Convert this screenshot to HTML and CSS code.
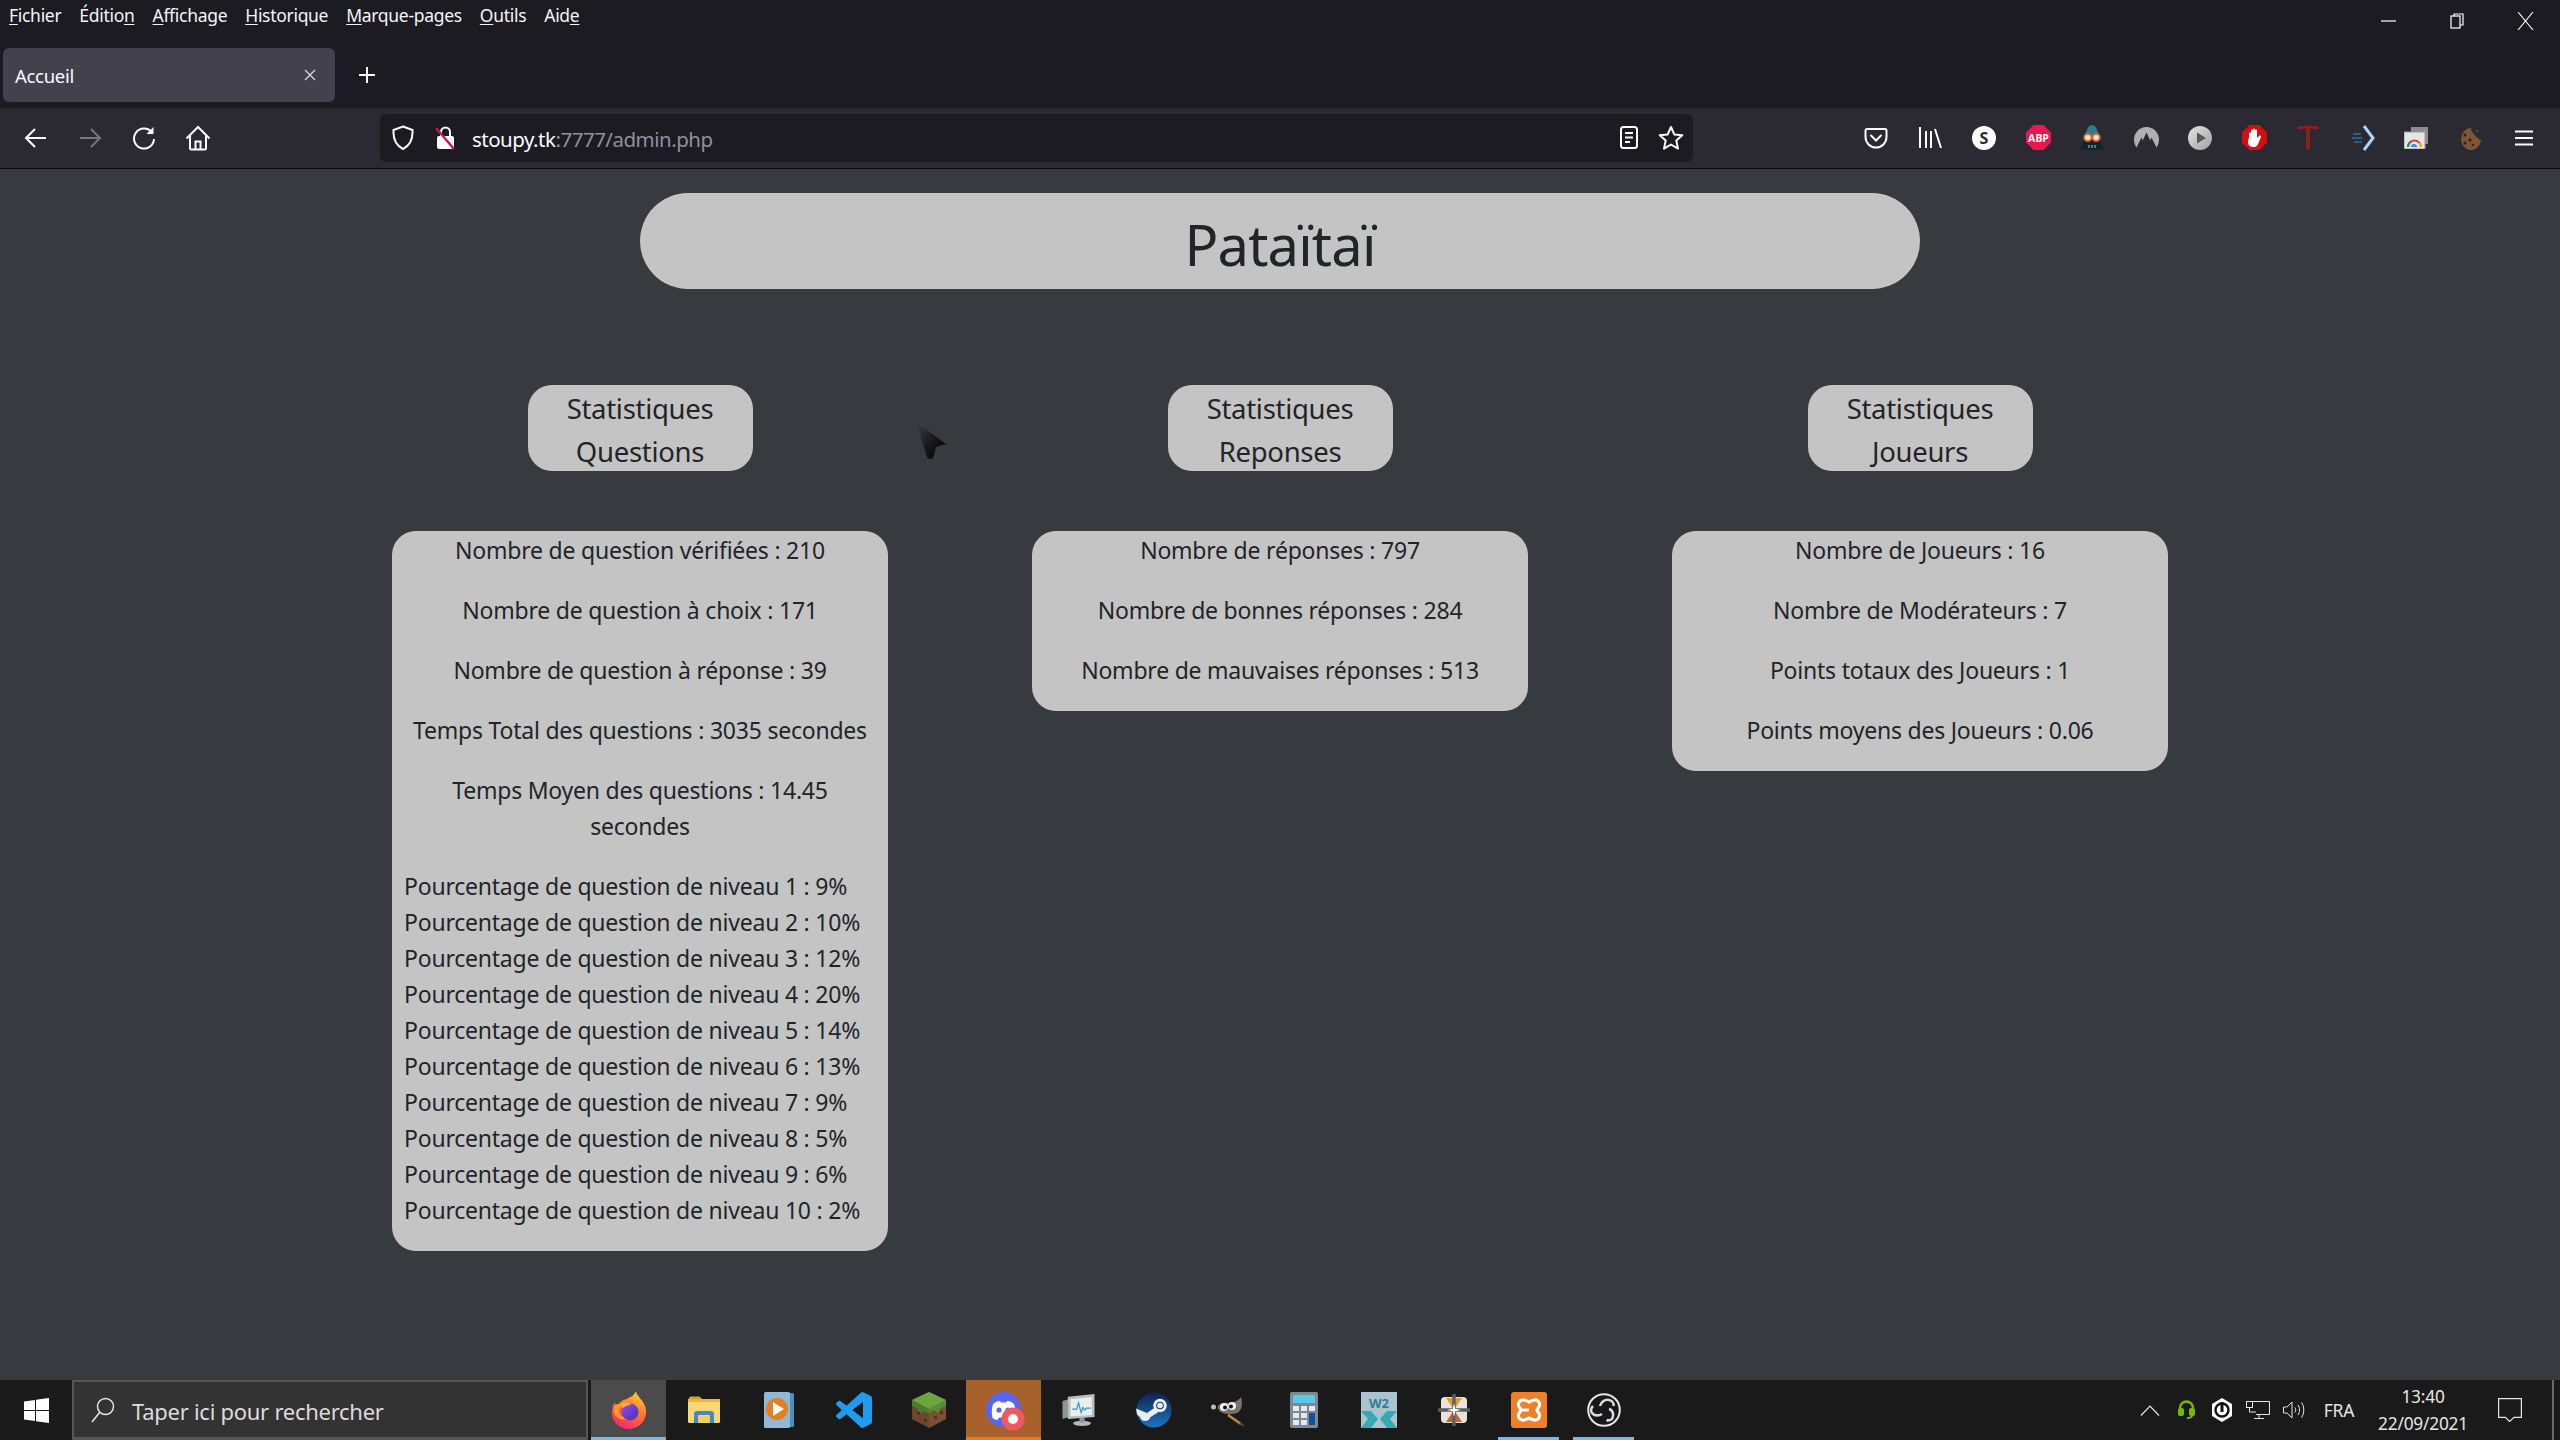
FILE: index.html
```html
<!DOCTYPE html>
<html lang="fr">
<head>
<meta charset="utf-8">
<title>Accueil</title>
<link rel="stylesheet" href="styles.css">
</head>
<body>
<header class="browser">
  <div class="titlebar">
    <nav class="menu">
      <span><u>F</u>ichier</span><span>Éditio<u>n</u></span><span><u>A</u>ffichage</span><span><u>H</u>istorique</span><span><u>M</u>arque-pages</span><span><u>O</u>utils</span><span>Aid<u>e</u></span>
    </nav>
    <div class="winctl">
      <svg width="16" height="16" viewBox="0 0 16 16"><path d="M0 8h15" stroke="#fff" stroke-width="1.2"/></svg>
      <svg width="16" height="16" viewBox="0 0 16 16" fill="none" stroke="#fff" stroke-width="1.2"><rect x="2" y="3" width="9" height="12"/><path d="M5 3V1h9v11h-3"/></svg>
      <svg width="18" height="18" viewBox="0 0 18 18"><path d="M1 0l15 18M16 0L1 18" stroke="#fff" stroke-width="1.1"/></svg>
    </div>
  </div>
  <div class="tabbar">
    <div class="tab"><span>Accueil</span>
      <svg width="12" height="12" viewBox="0 0 12 12"><path d="M1 1l10 10M11 1L1 11" stroke="#ddd" stroke-width="1.2"/></svg>
    </div>
    <svg class="newtab" width="18" height="18" viewBox="0 0 18 18"><path d="M9 1v16M1 9h16" stroke="#fff" stroke-width="2"/></svg>
  </div>
  <div class="navbar">
    <div class="navbtns">
      <span class="slot"><svg width="24" height="24" viewBox="0 0 24 24" fill="none" stroke="#fbfbfe" stroke-width="2"><path d="M22 12H2M11 3l-9 9 9 9"/></svg></span>
      <span class="slot"><svg width="24" height="24" viewBox="0 0 24 24" fill="none" stroke="#77767c" stroke-width="2"><path d="M2 12h20M13 3l9 9-9 9"/></svg></span>
      <span class="slot"><svg width="24" height="24" viewBox="0 0 24 24" fill="none" stroke="#fbfbfe" stroke-width="2"><path d="M20 6.5A10 10 0 1 0 22 13"/><path d="M21.5 1v7h-7z" fill="#fbfbfe" stroke="none"/></svg></span>
      <span class="slot"><svg width="26" height="26" viewBox="0 0 26 26" fill="none" stroke="#fbfbfe" stroke-width="2"><path d="M1.5 13.5L13 2l11.500 11.500M5 10.500V23a1.500 1.500 0 0 0 1.500 1.500h13A1.500 1.500 0 0 0 21 23V10.500"/><path d="M10.500 24v-7.500h5V24"/></svg></span>
    </div>
    <div class="urlbar">
      <svg class="shield" width="22" height="25" viewBox="0 0 22 25" fill="none" stroke="#fbfbfe" stroke-width="2"><path d="M11 1.500L20.500 5c.5 8-1.500 15-9.500 19C3 20 1 13 1.500 5z"/></svg>
      <svg class="lock" width="22" height="26" viewBox="0 0 22 26" fill="none"><path d="M7 11V7a4.500 4.500 0 0 1 9 0v4" stroke="#fbfbfe" stroke-width="2"/><rect x="3" y="11" width="17" height="13" rx="2" fill="#fbfbfe"/><path d="M2 3l18 21" stroke="#c5194f" stroke-width="2.400"/></svg>
      <span class="url"><b>stoupy.tk</b>:7777/admin.php</span>
      <span class="urlicons">
        <svg width="18" height="23" viewBox="0 0 18 23" fill="none" stroke="#fbfbfe" stroke-width="2"><rect x="1" y="1" width="16" height="21" rx="2.500"/><path d="M5 7h8M5 11.500h8M5 16h5"/></svg>
        <svg width="26" height="26" viewBox="0 0 26 26" fill="none" stroke="#fbfbfe" stroke-width="2" stroke-linejoin="round"><path d="M13 2l3.300 7.400 8 .8-6 5.400 1.700 8L13 19.500 6 23.600l1.700-8-6-5.400 8-.8z"/></svg>
      </span>
    </div>
    <div class="extensions">
      <span class="slot"><svg width="24" height="24" viewBox="0 0 24 24" fill="none" stroke="#fbfbfe" stroke-width="2"><path d="M3 3h18a1.500 1.500 0 0 1 1.500 1.500V11A10.500 10.500 0 0 1 1.500 11V4.500A1.500 1.500 0 0 1 3 3z"/><path d="M7 9.500l5 5 5-5" stroke-linecap="round"/></svg></span>
      <span class="slot"><svg width="24" height="24" viewBox="0 0 24 24" fill="none" stroke="#fbfbfe" stroke-width="2"><path d="M2 1v21M8 5v17M13 5v17M17 3l6 19"/></svg></span>
      <span class="slot"><svg width="24" height="24" viewBox="0 0 24 24"><circle cx="12" cy="12" r="12" fill="#fff"/><text x="12" y="17.500" text-anchor="middle" class="ext-s">S</text></svg></span>
      <span class="slot"><svg width="25" height="25" viewBox="0 0 25 25"><path d="M7.500 0h10L25 7.500v10L17.500 25h-10L0 17.500v-10z" fill="#e8174f"/><text x="12.500" y="17" text-anchor="middle" class="ext-abp">ABP</text></svg></span>
      <span class="slot"><svg width="26" height="26" viewBox="0 0 26 26"><path d="M13 0c3 0 5 3 6 8H7c1-5 3-8 6-8z" fill="#2c7d8c"/><path d="M7 7h12l2 8 4 10H1l4-10z" fill="#13242c"/><path d="M7 7h12l1 4H6z" fill="#2c7d8c"/><circle cx="8.800" cy="12.500" r="3.700" fill="#f2e2cf" stroke="#d9622c" stroke-width="1.800"/><circle cx="17.200" cy="12.500" r="3.700" fill="#f2e2cf" stroke="#d9622c" stroke-width="1.800"/><path d="M10 20v3M13 20v3M16 20v3" stroke="#a9c9cf"/></svg></span>
      <span class="slot"><svg width="25" height="21" viewBox="0 0 25 21"><path d="M12.500 0A12.500 12.500 0 0 1 25 12.500c0 3-1 6-2.500 8l-5-10-1.200 3-3.800-8-3.800 8-1.200-3-5 10C1 18.500 0 15.500 0 12.500A12.500 12.500 0 0 1 12.500 0z" fill="#b0b0b3"/></svg></span>
      <span class="slot"><svg width="24" height="24" viewBox="0 0 24 24"><defs><linearGradient id="ply" x1="0" y1="0" x2="1" y2="1"><stop offset="0" stop-color="#e4e4e4"/><stop offset="1" stop-color="#a0a0a0"/></linearGradient></defs><circle cx="12" cy="12" r="12" fill="url(#ply)"/><path d="M9 6.500l9 5.500-9 5.500z" fill="#55555a"/></svg></span>
      <span class="slot"><svg width="25" height="25" viewBox="0 0 25 25"><path d="M7.500 0h10L25 7.500v10L17.500 25h-10L0 17.500v-10z" fill="#d50f0f"/><path d="M7 12V8.500a1 1 0 0 1 2 0V12V5.500a1 1 0 0 1 2 0V12V4.500a1 1 0 0 1 2 0V12V5.500a1 1 0 0 1 2 0V13l2-2c1-1 2.500 0 2 1l-3 7c-1 2-2 3-4 3-3 0-6-1-6-5z" fill="#fff"/></svg></span>
      <span class="slot"><svg width="22" height="25" viewBox="0 0 22 25"><path d="M1 1h20v3.500L13 3.500V23l-2 2H9V3.500l-8 1z" fill="#8c1f18"/></svg></span>
      <span class="slot"><svg class="ext-arrow" width="24" height="26" viewBox="0 0 24 26" fill="none"><path d="M12 1l9 12-9 12" stroke="#a9d4f5" stroke-width="3"/><path d="M1 9h8M0 13h10M2 17h8" stroke="#2d6da8" stroke-width="1.600"/></svg></span>
      <span class="slot"><svg width="24" height="22" viewBox="0 0 24 22"><rect x="7" y="0" width="17" height="17" fill="#8d8d90"/><rect x="0" y="5" width="21" height="17" fill="#e6e6e6" stroke="#999"/><path d="M4 20a6.500 6.500 0 0 1 13 0" fill="none" stroke="#db4437" stroke-width="2"/><path d="M4 20a6.500 6.500 0 0 1 3-5.500" fill="none" stroke="#0f9d58" stroke-width="2"/><path d="M13 20a3 3 0 0 0-6 0z" fill="#4285f4"/><path d="M17 20a6.500 6.500 0 0 0-1.500-4" fill="none" stroke="#f4b400" stroke-width="2"/></svg></span>
      <span class="slot"><svg width="22" height="24" viewBox="0 0 22 24"><path d="M12 2a10 11 0 1 0 10 12c-2 0-3-1-3-2.500-2 0-4-1.500-3.500-4C13.500 7.500 12 5 12 2z" fill="#7d5635"/><circle cx="6" cy="9" r="1.500" fill="#33200f"/><circle cx="11" cy="14" r="1.500" fill="#33200f"/><circle cx="6" cy="17" r="1.500" fill="#33200f"/><circle cx="14" cy="19" r="1.200" fill="#33200f"/><circle cx="18" cy="5" r="1" fill="#7d5635"/></svg></span>
      <span class="slot"><svg width="18" height="16" viewBox="0 0 18 16"><path d="M0 1.500h18M0 8h18M0 14.500h18" stroke="#fbfbfe" stroke-width="2"/></svg></span>
    </div>
  </div>
</header>

<main class="page">
  <h1 class="title">Pataïtaï</h1>
  <div class="columns">
    <section class="col">
      <h2 class="col-head">Statistiques<br>Questions</h2>
      <div class="card">
        <p>Nombre de question vérifiées : 210</p>
        <p>Nombre de question à choix : 171</p>
        <p>Nombre de question à réponse : 39</p>
        <p>Temps Total des questions : 3035 secondes</p>
        <p>Temps Moyen des questions : 14.45 secondes</p>
        <ul class="levels">
          <li>Pourcentage de question de niveau 1 : 9%</li>
          <li>Pourcentage de question de niveau 2 : 10%</li>
          <li>Pourcentage de question de niveau 3 : 12%</li>
          <li>Pourcentage de question de niveau 4 : 20%</li>
          <li>Pourcentage de question de niveau 5 : 14%</li>
          <li>Pourcentage de question de niveau 6 : 13%</li>
          <li>Pourcentage de question de niveau 7 : 9%</li>
          <li>Pourcentage de question de niveau 8 : 5%</li>
          <li>Pourcentage de question de niveau 9 : 6%</li>
          <li>Pourcentage de question de niveau 10 : 2%</li>
        </ul>
      </div>
    </section>
    <section class="col">
      <h2 class="col-head">Statistiques<br>Reponses</h2>
      <div class="card">
        <p>Nombre de réponses : 797</p>
        <p>Nombre de bonnes réponses : 284</p>
        <p>Nombre de mauvaises réponses : 513</p>
      </div>
    </section>
    <section class="col">
      <h2 class="col-head">Statistiques<br>Joueurs</h2>
      <div class="card">
        <p>Nombre de Joueurs : 16</p>
        <p>Nombre de Modérateurs : 7</p>
        <p>Points totaux des Joueurs : 1</p>
        <p>Points moyens des Joueurs : 0.06</p>
      </div>
    </section>
  </div>
  <svg class="cursor" width="30" height="37" viewBox="0 0 30 37">
    <defs><linearGradient id="cur" x1="0" y1="0" x2="1" y2="1"><stop offset="0" stop-color="#3c3e44"/><stop offset=".6" stop-color="#141416"/><stop offset="1" stop-color="#000"/></linearGradient></defs>
    <path d="M0 0l30 22-10 3-3 11c-2 2-5 1-6-1z" fill="url(#cur)"/>
  </svg>
</main>

<footer class="taskbar">
  <span class="start"><svg width="25" height="25" viewBox="0 0 25 25" fill="#fff"><path d="M0 3.500l11-1.500v10H0zM12 1.800L25 0v12H12zM0 13h11v10L0 21.500zM12 13h13v12l-13-1.800z"/></svg></span>
  <div class="search">
    <svg width="24" height="26" viewBox="0 0 24 26" fill="none" stroke="#e6e6e6" stroke-width="1.500"><circle cx="14.500" cy="9.500" r="8"/><path d="M8.800 15.200L1 25"/></svg>
    <span class="search-text">Taper ici pour rechercher</span>
  </div>
  <div class="apps">
    <span class="app active">
      <svg width="36" height="38" viewBox="0 0 36 38">
        <defs>
          <linearGradient id="ffa" x1="0.800" y1="0" x2="0.300" y2="1"><stop offset="0" stop-color="#ffd43a"/><stop offset=".45" stop-color="#ff7b2b"/><stop offset="1" stop-color="#f5256b"/></linearGradient>
          <linearGradient id="ffb" x1="0" y1="0" x2="1" y2="1"><stop offset="0" stop-color="#9b49e6"/><stop offset="1" stop-color="#3a36b5"/></linearGradient>
        </defs>
        <path d="M25 0c0 5 9 10 10 19 1 10-7 19-17 19C8 38 0 30 1 20c.2-3 1-6 3-9 0 3 1 4 2 5 1-4 5-7 10-8 3-2 7-3 9-8z" fill="url(#ffa)"/>
        <path d="M4 14c3-2 7-1 9 1-4 0-6 3-5 6 1 4 5 6 10 6-5 3-13 1-15-5-1-3 0-6 1-8z" fill="#ff9a2b"/>
        <circle cx="19" cy="21" r="8.500" fill="url(#ffb)"/>
        <path d="M10 13c3-2 7-2 10 1-3 0-6 1-8 3z" fill="#ffb63a"/>
      </svg>
    </span>
    <span class="app">
      <svg width="32" height="28" viewBox="0 0 32 28"><path d="M1 2a1.500 1.500 0 0 1 1.500-1.500h9L15 4h-14z" fill="#d6a21e"/><rect x="0" y="3" width="32" height="24" rx="1.500" fill="#f8d775"/><rect x="0" y="3" width="32" height="3" fill="#e9b83a"/><path d="M6 27v-9a3 3 0 0 1 3-3h14a3 3 0 0 1 3 3v9h-4v-7a1 1 0 0 0-1-1H11a1 1 0 0 0-1 1v7z" fill="#3f8cc9"/><rect x="10" y="20" width="12" height="7" fill="#f8cf52"/></svg>
    </span>
    <span class="app">
      <svg width="30" height="36" viewBox="0 0 30 36"><rect x="6" y="1" width="24" height="34" rx="1.500" fill="#4f8fbd"/><rect x="0" y="0" width="26" height="36" rx="1.500" fill="#8fb9d6"/><circle cx="13" cy="17" r="11" fill="#e67e22"/><path d="M9 10l11 7-11 7z" fill="#fff"/></svg>
    </span>
    <span class="app">
      <svg width="36" height="36" viewBox="0 0 24 24"><path fill="#1f9cf0" d="M23.150 2.587L18.210.21a1.494 1.494 0 0 0-1.705.29l-9.460 8.630-4.120-3.128a.999.999 0 0 0-1.276.057L.327 7.261A1 1 0 0 0 .326 8.740L3.899 12 .326 15.260a1 1 0 0 0 .001 1.479L1.650 17.940a.999.999 0 0 0 1.276.057l4.120-3.128 9.460 8.630a1.492 1.492 0 0 0 1.704.29l4.942-2.377A1.500 1.500 0 0 0 24 20.060V3.939a1.500 1.500 0 0 0-.850-1.352zm-5.146 14.861L10.826 12l7.178-5.448v10.896z"/></svg>
    </span>
    <span class="app">
      <svg width="34" height="36" viewBox="0 0 34 36"><path d="M17 0l17 8v19l-17 9-17-9V8z" fill="#7a5232"/><path d="M17 0l17 8-17 9L0 8z" fill="#6aa83f"/><path d="M0 8l17 9v5l-5-3-3 3-3-5-6-3zM34 8l-17 9v4l5-3 4 3 3-5 5-2z" fill="#568f33"/><path d="M17 17v19L0 27V8z" fill="#000" opacity=".12"/><g fill="#4f3420"><rect x="5" y="20" width="3" height="3"/><rect x="12" y="27" width="3" height="3"/><rect x="22" y="24" width="3" height="3"/><rect x="28" y="19" width="3" height="3"/></g></svg>
    </span>
    <span class="app discord">
      <svg class="discord-icon" width="40" height="40" viewBox="0 0 40 40"><circle cx="17.500" cy="17.500" r="17.500" fill="#5865f2"/><path d="M7 12c3-2.500 5-3 7-3l1 1.500h5L21 9c2 0 4 .5 7 3 2 5 2 10 1 14-2 1.500-4 2-5 2l-1.500-2.500H13L11.500 28c-1 0-3-.5-5-2-1-4-1-9 .5-14z" fill="#fff"/><circle cx="13" cy="18" r="2.600" fill="#5865f2"/><circle cx="22" cy="18" r="2.600" fill="#5865f2"/><circle cx="27" cy="27" r="11.500" fill="#ee5a5f"/><circle cx="27" cy="27" r="5" fill="#fff"/></svg>
    </span>
    <span class="app">
      <svg width="33" height="32" viewBox="0 0 36 36"><path d="M0 8l7-2v20l-7 2z" fill="#8e9593"/><path d="M6 3l30-3v26L6 28z" fill="#b9bebe"/><path d="M9 6l24-2.500v20L9 25z" fill="#e9eef1"/><path d="M11 17h5l2-7 3 11 2-6 2 3 2-2h5" fill="none" stroke="#3a93d8" stroke-width="1.400"/><ellipse cx="22" cy="33" rx="10" ry="3" fill="#b5b9b9"/><rect x="19" y="27" width="6" height="5" fill="#8f9393"/></svg>
    </span>
    <span class="app">
      <svg width="36" height="36" viewBox="0 0 36 36"><defs><linearGradient id="stm" x1="0" y1="0" x2="0" y2="1"><stop offset="0" stop-color="#0f2350"/><stop offset="1" stop-color="#1a74c4"/></linearGradient></defs><circle cx="18" cy="18" r="17.500" fill="url(#stm)"/><circle cx="24" cy="13.500" r="6.800" fill="#e8edf0"/><circle cx="24" cy="13.500" r="3.800" fill="#16376f"/><circle cx="24" cy="13.500" r="2.800" fill="#e8edf0"/><path d="M0 16.500l11 4.500 8-5.500 3 5-7.500 4.500c-1 3-3.500 4-5.500 4-3 0-4.500-2-5-4L1 22.500z" fill="#e8edf0"/></svg>
    </span>
    <span class="app">
      <svg width="36" height="34" viewBox="0 0 36 34"><path d="M7 13c2-3 7-4 10-3 5 0 10-2 13-6 2 6 1 14-4 16-3 1-9 2-14 0-3-1-6-4-5-7z" fill="#77736a"/><circle cx="2.500" cy="14" r="2.500" fill="#bbb"/><circle cx="13" cy="14" r="4" fill="#eee"/><circle cx="21" cy="13" r="4" fill="#eee"/><circle cx="14" cy="14.500" r="2" fill="#111"/><circle cx="20" cy="13.500" r="2" fill="#111"/><path d="M17 22l13 9" stroke="#c98a2b" stroke-width="2.500"/><path d="M29 30l4 3" stroke="#444" stroke-width="2"/></svg>
    </span>
    <span class="app">
      <svg width="28" height="36" viewBox="0 0 28 36"><rect width="28" height="36" rx="2" fill="#7d8a96"/><rect x="3" y="3" width="22" height="8" fill="#5ac8e8"/><g fill="#e3e8ec"><rect x="3" y="14" width="6" height="5"/><rect x="11" y="14" width="6" height="5"/><rect x="19" y="14" width="6" height="5"/><rect x="3" y="21" width="6" height="5"/><rect x="11" y="21" width="6" height="5"/><rect x="3" y="28" width="6" height="5"/><rect x="11" y="28" width="6" height="5"/></g><rect x="19" y="21" width="6" height="12" fill="#16509a"/></svg>
    </span>
    <span class="app">
      <svg width="36" height="36" viewBox="0 0 36 36"><rect width="36" height="36" fill="#a9c4cf"/><text x="18" y="15.500" text-anchor="middle" class="wiz">W2</text><path d="M0 19h10l7 8-7 9H0l7-9zM36 19H26l-7 8 7 9h10l-7-9z" fill="#37a9b5"/></svg>
    </span>
    <span class="app">
      <svg width="32" height="32" viewBox="0 0 32 32"><rect x="3" y="3" width="26" height="26" rx="4" fill="#e8e4dc"/><path d="M16 16L8 4h8zM16 16l8-12h-6z" fill="#dda02e"/><path d="M16 16L8 28h7zM16 16l8 12h-6z" fill="#c9652a"/><path d="M16 0v32M0 16h32" stroke="#5a5d62" stroke-width="3.400"/><path d="M16 9l1.500 7L16 23l-1.500-7zM9 16l7-1.500 7 1.500-7 1.500z" fill="#fff"/></svg>
    </span>
    <span class="app running">
      <svg width="36" height="36" viewBox="0 0 36 36"><rect width="36" height="36" rx="3" fill="#f07f27"/><path d="M9 9c3-2 5-1 9 1 4-2 6-3 9-1 2 2 2 5 0 7l-1 2 1 2c2 2 2 5 0 7-3 2-5 1-9-1-4 2-6 3-9 1-2-2-2-5 0-7l1-2-1-2c-2-2-2-5 0-7z" fill="none" stroke="#fff" stroke-width="3.200"/><path d="M8 18h10" stroke="#fff" stroke-width="3"/></svg>
    </span>
    <span class="app running">
      <svg width="34" height="34" viewBox="0 0 34 34"><circle cx="17" cy="17" r="15.800" fill="#18181c" stroke="#e6e6e6" stroke-width="2"/><g fill="none" stroke="#d8d8d8" stroke-width="2.600"><path d="M13 13c1-4 5-7 9-6 3 .6 5 3 4.500 6"/><path d="M22 16c4 1 5 6 3.500 9-1 2-4 3-6 2"/><path d="M15 21c-3 2-8 2-10-1-1.500-2-1-5 1-7"/></g></svg>
    </span>
  </div>
  <div class="tray">
    <span class="tray-icon"><svg width="20" height="11" viewBox="0 0 20 11" fill="none" stroke="#e6e6e6" stroke-width="1.200"><path d="M1 10.500l9-9.500 9 9.500"/></svg></span>
    <span class="tray-icon"><svg width="17" height="20" viewBox="0 0 17 20" fill="none" stroke="#76b900" stroke-width="2.400"><path d="M2 12V8a6.500 6.500 0 0 1 13 0v4"/><rect x="0" y="8" width="6" height="8" rx="2" fill="#76b900" stroke="none"/><rect x="11" y="8" width="6" height="8" rx="2" fill="#76b900" stroke="none"/><path d="M14 15c0 2-2 3-5 3" stroke-width="2"/></svg></span>
    <span class="tray-icon"><svg width="22" height="24" viewBox="0 0 22 24"><path d="M11 0l10 6v12l-10 6-10-6V6z" fill="#fff"/><circle cx="11" cy="12" r="6.500" fill="none" stroke="#111" stroke-width="2.400"/><path d="M11 4v10" stroke="#111" stroke-width="3"/></svg></span>
    <span class="tray-icon"><svg width="24" height="18" viewBox="0 0 24 18" fill="none" stroke="#e6e6e6"><path d="M7 .5h16.500v13H10"/><rect x=".5" y=".5" width="6" height="6"/><path d="M3.500 6.500V11H10M3.500 3h0M13 14v3M8 17.500h10"/></svg></span>
    <span class="tray-icon"><svg width="23" height="18" viewBox="0 0 23 18" fill="none" stroke="#e6e6e6"><path d="M.5 6h3.500L9 1v16l-5-5H.5z"/><path d="M12 6.500c1 1.500 1 3.500 0 5M15 4c2 3 2 7 0 10M18.500 1.500c3 4 3 11 0 15"/></svg></span>
    <span class="lang">FRA</span>
    <span class="clock"><span>13:40</span><span>22/09/2021</span></span>
    <span class="notif"><svg width="24" height="24" viewBox="0 0 24 24" fill="none" stroke="#e6e6e6" stroke-width="1.200"><path d="M.6.6h22.800v18.800H16L11.500 23.500 7.500 19.400H.6z"/></svg></span>
    <span class="desktop"></span>
  </div>
</footer>
</body>
</html>
```
FILE: styles.css
```css
* { box-sizing: border-box; }
html, body { height: 100%; }
body {
  margin: 0;
  width: 2560px;
  height: 1440px;
  overflow: hidden;
  display: flex;
  flex-direction: column;
  background: #373a3f;
  font-family: "Noto Sans", "Open Sans", sans-serif;
  color: #212529;
}
svg { display: block; flex: none; }

/* Browser chrome */
.browser { flex: none; background: #1c1b22; color: #fbfbfe; }
.titlebar { height: 48px; display: flex; justify-content: space-between; align-items: flex-start; }
.menu { display: flex; gap: 18px; padding: 3px 0 0 9px; font-size: 17.500px; line-height: 25px; letter-spacing: -0.3px; color: #f4f4f6; }
.menu u { text-underline-offset: 2px; text-decoration-thickness: 1px; }
.winctl { display: flex; align-items: center; height: 42px; padding-right: 25px; gap: 52px; }
.tabbar { height: 60px; display: flex; align-items: flex-start; padding-left: 3px; }
.tab {
  width: 332px; height: 54px; background: #42414d; border-radius: 6px;
  display: flex; align-items: center; justify-content: space-between;
  padding: 0 19px 0 12px; font-size: 18.500px; letter-spacing: -0.3px;
}
.newtab { margin: 18px 0 0 23px; }
.navbar {
  height: 61px; background: #2b2a33; border-bottom: 1px solid #0c0c0d;
  display: flex; align-items: center; padding-bottom: 1px;
}
.slot { width: 54px; height: 48px; flex: none; display: flex; align-items: center; justify-content: center; }
.navbtns { display: flex; width: 380px; padding-left: 9px; }
.urlbar {
  width: 1313px; height: 48px; background: #1c1b22; border-radius: 6px;
  display: flex; align-items: center; padding: 0 9px 0 12px;
}
.lock { margin-left: 20px; }
.url { margin-left: 16px; padding-top: 2px; font-size: 20.500px; letter-spacing: -0.5px; color: #8f8f9d; }
.url b { font-weight: 400; color: #fbfbfe; }
.urlicons { margin-left: auto; display: flex; align-items: center; gap: 20px; }
.extensions { display: flex; margin-left: 156px; }
.ext-s { font: 700 16px "Noto Sans", sans-serif; fill: #2b2a33; }
.ext-abp { font: 700 10.500px "Noto Sans", sans-serif; fill: #fff; }
.ext-arrow { transform: translateX(2px); }
.wiz { font: 700 13px "Noto Sans", sans-serif; fill: #2f7f96; }

/* Page */
.page { flex: 1; min-height: 0; position: relative; display: flex; flex-direction: column; align-items: center; padding-top: 24px; }
.title {
  width: 1280px; height: 96px; margin: 0; padding-top: 3px; background: #c4c4c4; border-radius: 48px;
  text-align: center; font-size: 56px; font-weight: 400; line-height: 96px; letter-spacing: -0.8px;
}
.columns { width: 1920px; margin-top: 96px; display: grid; grid-template-columns: repeat(3, 640px); }
.col { display: flex; flex-direction: column; align-items: center; }
.col-head {
  width: 225px; height: 86px; margin: 0 0 60px; padding-top: 2px; background: #c4c4c4; border-radius: 24px;
  text-align: center; font-size: 27.500px; font-weight: 400; line-height: 43px; letter-spacing: -0.3px;
}
.card {
  width: 496px; background: #c4c4c4; border-radius: 24px; padding: 1px 12px 0;
  font-size: 23px; line-height: 36px; letter-spacing: -0.22px; text-align: center;
}
.card p { margin: 0 0 24px; }
.card > :last-child { margin-bottom: 23px; }
.levels { list-style: none; margin: 0 0 24px; padding: 0; text-align: left; }
.cursor { position: absolute; left: 916px; top: 253px; }

/* Taskbar */
.taskbar { flex: none; height: 60px; background: #1a1a1a; color: #e6e6e6; display: flex; align-items: stretch; }
.start { width: 72px; display: flex; align-items: center; justify-content: center; }
.search {
  width: 516px; background: #333; border: 2px solid #565656; border-bottom-width: 3px;
  display: flex; align-items: center; gap: 17px; padding-left: 17px;
  font-size: 22px; letter-spacing: -0.27px; color: #dcdcdc;
}
.search-text { padding-top: 2px; }
.apps { display: flex; margin-left: 3px; }
.app { position: relative; width: 75px; display: flex; align-items: center; justify-content: center; }
.app.active { background: #4b4b4b; }
.app.active::after, .app.discord::after, .app.running::after {
  content: ""; position: absolute; bottom: 0; height: 3px; background: #76b9ed;
}
.app.active::after { left: 0; right: 0; }
.app.running::after { left: 7px; right: 7px; }
.app.discord { background: #a8612a; }
.app.discord::after { left: 0; right: 0; background: #f7760d; }
.discord-icon { transform: translate(2px, 2px); }
.tray { margin-left: auto; display: flex; align-items: center; height: 100%; }
.tray-icon { width: 36px; display: flex; justify-content: center; }
.lang { width: 54px; text-align: center; font-size: 17.500px; letter-spacing: -0.2px; }
.clock { width: 114px; display: flex; flex-direction: column; align-items: center; font-size: 17.300px; line-height: 27px; letter-spacing: -0.2px; }
.notif { width: 60px; display: flex; justify-content: center; }
.desktop { width: 20px; height: 100%; position: relative; }
.desktop::before { content: ""; position: absolute; left: 12px; top: 0; bottom: 0; width: 2px; background: #6a6a6a; }
```
